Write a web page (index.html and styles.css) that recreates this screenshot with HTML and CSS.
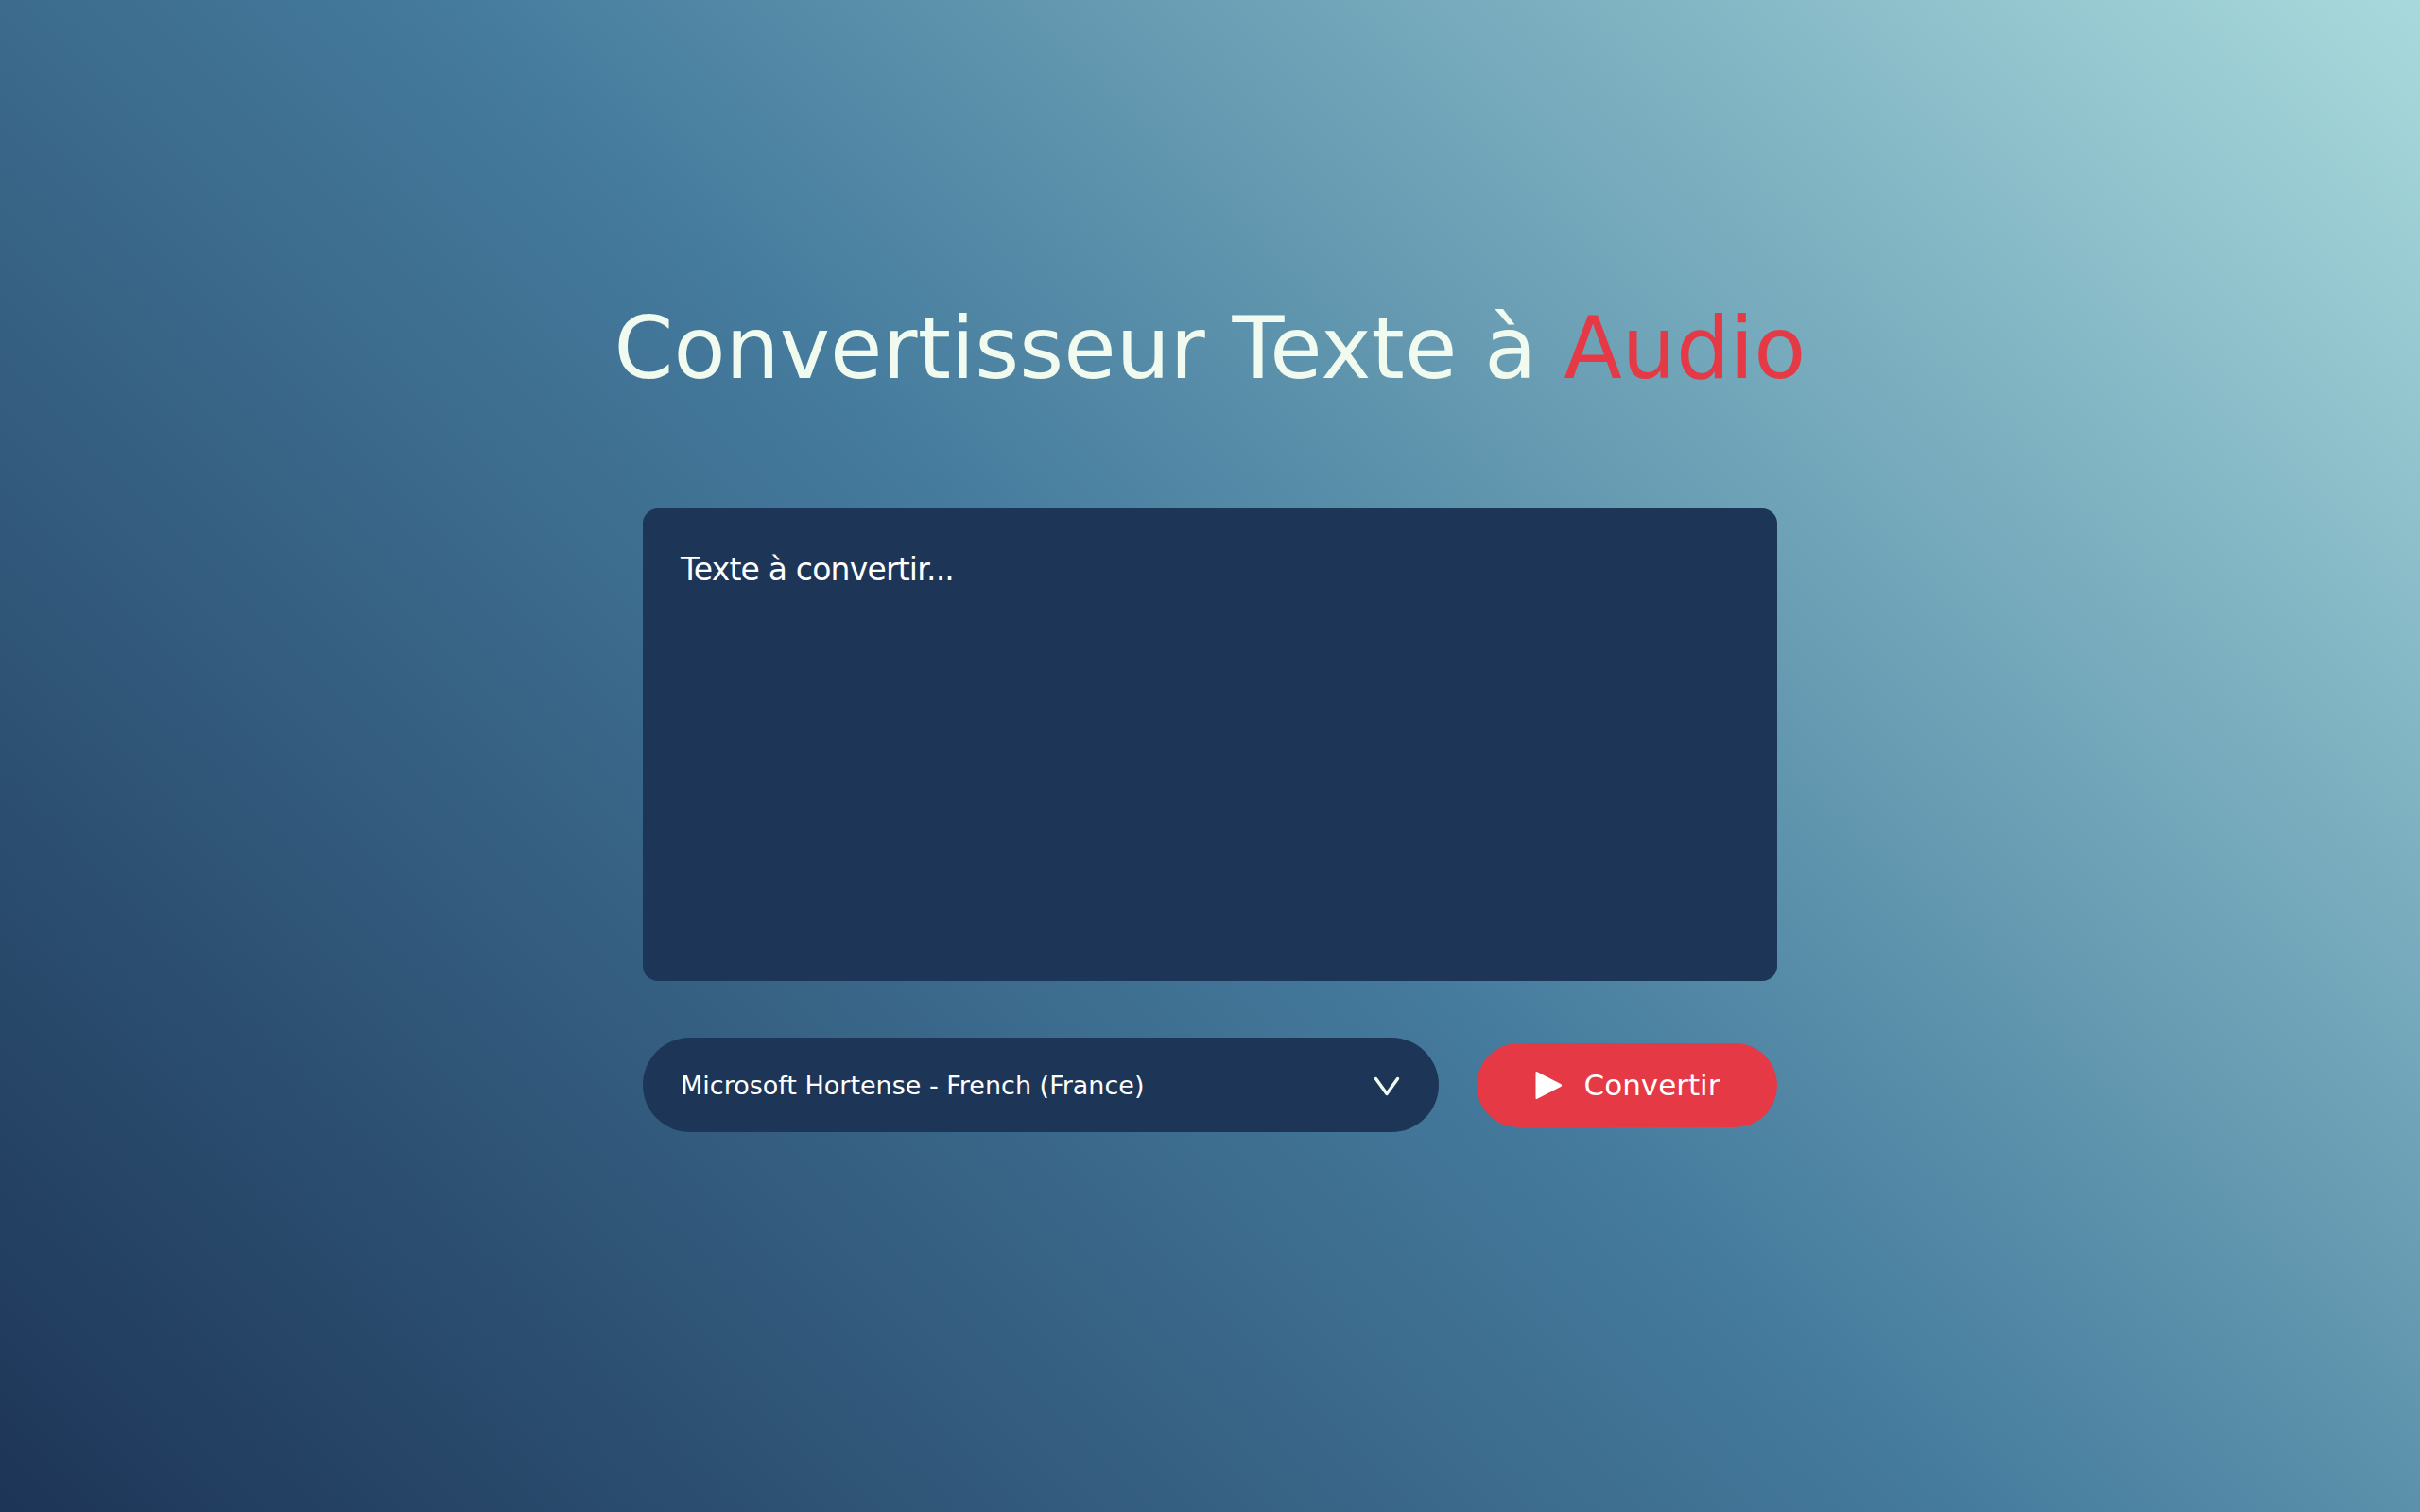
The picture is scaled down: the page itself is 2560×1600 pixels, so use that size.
FILE: index.html
```html
<!DOCTYPE html>
<html lang="fr">
<head>
<meta charset="utf-8">
<title>Convertisseur Texte à Audio</title>
<link rel="stylesheet" href="styles.css">
</head>
<body>
<main class="app">
  <h1 class="title">Convertisseur Texte à <span class="accent">Audio</span></h1>
  <textarea class="text-input" placeholder="Texte à convertir..."></textarea>
  <div class="controls">
    <div class="select-wrap">
      <select class="voice-select">
        <option>Microsoft Hortense - French (France)</option>
      </select>
      <svg class="chevron" width="28" height="21" viewBox="0 0 28 21" aria-hidden="true">
        <path d="M2.5 2.5 L14 18.5 L25.5 2.5" fill="none" stroke="#f1faee" stroke-width="3.4" stroke-linecap="round" stroke-linejoin="round"/>
      </svg>
    </div>
    <button class="convert-btn" type="button">
      <svg class="play" width="30" height="31" viewBox="0 0 30 31" aria-hidden="true">
        <path d="M1.5 2.2 Q1.5 0.4 3.2 1.3 L28.5 14.2 Q30 15.5 28.5 16.8 L3.2 29.7 Q1.5 30.6 1.5 28.8 Z" fill="#ffffff"/>
      </svg>
      <span>Convertir</span>
    </button>
  </div>
</main>
</body>
</html>
```
FILE: styles.css
```css
* { box-sizing: border-box; }
html, body { height: 100%; }
body {
  margin: 0;
  min-height: 100vh;
  background: linear-gradient(45deg, #1d3557 0%, #457b9d 50%, #a8dadc 100%);
  font-family: "DejaVu Sans", "Open Sans", sans-serif;
  color: #f1faee;
}
.app {
  display: flex;
  flex-direction: column;
  align-items: center;
  padding-top: 315px;
}
.title {
  margin: 0;
  font-size: 90px;
  font-weight: 400;
  line-height: 108px;
  color: #f1faee;
  letter-spacing: 0.1px;
}
.accent { color: #e63946; }
.text-input {
  display: block;
  width: 1200px;
  height: 500px;
  margin-top: 115px;
  padding: 38px 40px;
  border: none;
  outline: none;
  resize: none;
  border-radius: 16px;
  background: #1d3557;
  color: #f1faee;
  font-family: "DejaVu Sans", "Open Sans", sans-serif;
  font-size: 33px;
  letter-spacing: -0.8px;
  line-height: 54px;
}
.text-input::placeholder { color: #ffffff; opacity: 1; }
.controls {
  width: 1200px;
  margin-top: 60px;
  display: flex;
  align-items: center;
  gap: 40px;
}
.select-wrap {
  position: relative;
  width: 842px;
  height: 100px;
  flex: none;
}
.voice-select {
  appearance: none;
  -webkit-appearance: none;
  width: 100%;
  height: 100%;
  border: none;
  outline: none;
  border-radius: 50px;
  background: #1d3557;
  color: #ffffff;
  padding: 0 90px 0 40px;
  font-family: "DejaVu Sans", "Open Sans", sans-serif;
  font-size: 27px;
}
.chevron {
  position: absolute;
  right: 41px;
  top: 41px;
  pointer-events: none;
}
.convert-btn {
  width: 318px;
  height: 89px;
  flex: none;
  border: none;
  border-radius: 45px;
  background: #e63946;
  color: #ffffff;
  display: flex;
  align-items: center;
  justify-content: center;
  gap: 23px;
  padding: 0;
  font-family: "DejaVu Sans", "Open Sans", sans-serif;
  font-size: 31px;
  cursor: pointer;
}
.play { display: block; flex: none; }
```
